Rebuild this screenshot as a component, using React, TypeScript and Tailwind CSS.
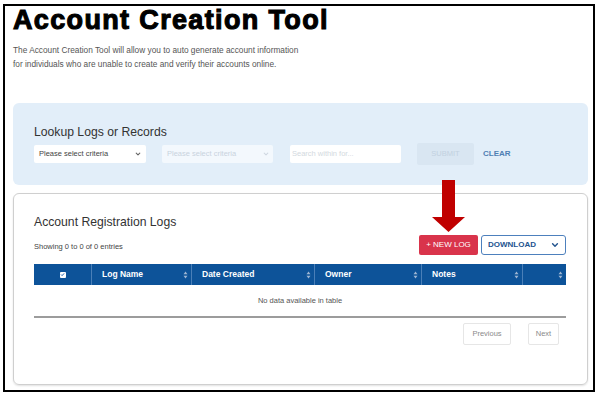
import React from 'react';

// Small up/down caret pair used on sortable table headers.
const SortIcon: React.FC = () => (
  <svg width="5" height="8" viewBox="0 0 5 8" className="shrink-0">
    <path d="M2.5 0.5 L4.5 3.2 L0.5 3.2 Z" fill="#9fb6d3" />
    <path d="M2.5 7.5 L4.5 4.8 L0.5 4.8 Z" fill="#9fb6d3" />
  </svg>
);

const Chevron: React.FC<{ color: string; size?: number }> = ({ color, size = 7 }) => (
  <svg width={size} height={size} viewBox="0 0 10 10" className="shrink-0">
    <path d="M2 3.5 L5 6.5 L8 3.5" fill="none" stroke={color} strokeWidth="1.8" strokeLinecap="round" strokeLinejoin="round" />
  </svg>
);

const columns = [
  { label: 'Log Name', width: 'w-[100px]' },
  { label: 'Date Created', width: 'w-[123px]' },
  { label: 'Owner', width: 'w-[107px]' },
  { label: 'Notes', width: 'w-[101px]' },
  { label: '', width: 'flex-1' },
];

export default function App() {
  return (
    <div className="relative h-[396px] w-[599px] bg-white pb-[4px] pl-[3px] pr-[4px] pt-[4px] font-['Liberation_Sans',Arial,sans-serif]">
      <div className="h-full border-2 border-black pl-[8px] pr-[5px]">
        <h1 className="text-[27px] font-bold leading-[28px] tracking-[1.35px] text-black [-webkit-text-stroke:1.1px_black]">
          Account Creation Tool
        </h1>
        <p className="mt-[9px] text-[8.3px] leading-[14px] text-[#555]">
          The Account Creation Tool will allow you to auto generate account information
          <br />
          for individuals who are unable to create and verify their accounts online.
        </p>

        {/* Lookup panel */}
        <section className="mt-[32px] h-[82px] rounded-md bg-[#e2eef9] pl-[21px] pt-[22px]">
          <h2 className="text-[12.2px] leading-[14px] text-[#333]">Lookup Logs or Records</h2>
          <div className="mt-[4px] flex h-[22px] items-center">
            <div className="flex h-[18px] w-[112px] items-center justify-between rounded-[2px] bg-white pl-[5px] pr-[5px] text-[7.5px] text-[#444]">
              <span>Please select criteria</span>
              <Chevron color="#666" size={6} />
            </div>
            <div className="ml-[16px] flex h-[18px] w-[111px] items-center justify-between rounded-[2px] bg-[#f3f8fd] pl-[5px] pr-[4px] text-[7.5px] text-[#c9d3de]">
              <span>Please select criteria</span>
              <Chevron color="#d0d8e2" size={6} />
            </div>
            <div className="ml-[17px] flex h-[18px] w-[111px] items-center rounded-[2px] bg-white pl-[2px] text-[7.5px] text-[#d3d9e0]">
              Search within for...
            </div>
            <div className="ml-[16px] flex h-[22px] w-[57px] items-center justify-center rounded-[2px] bg-[#d9e6f2] text-[7.5px] text-[#c2d1e0]">
              SUBMIT
            </div>
            <span className="ml-[9px] text-[8px] font-bold text-[#4f7fb3]">CLEAR</span>
          </div>
        </section>

        {/* Registration logs panel */}
        <section className="mt-[8px] h-[192px] rounded-md border border-[#cfcfcf] pl-[20px] pr-[21px] pt-[21px] shadow-[0_1px_2px_rgba(0,0,0,0.12)]">
          <h2 className="text-[12.2px] leading-[14px] text-[#333]">Account Registration Logs</h2>
          <div className="mt-[6px] flex h-[20px] items-center justify-between">
            <span className="mt-[3px] text-[7.5px] text-[#444]">Showing 0 to 0 of 0 entries</span>
            <div className="flex h-[20px] gap-[3px]">
              <div className="flex w-[59px] items-center justify-center rounded-[2px] bg-[#d9344b] text-[8px] text-white">
                + NEW LOG
              </div>
              <div className="flex w-[85px] items-center justify-between rounded-[3px] border border-[#4d80bd] bg-white pl-[6px] pr-[6px] text-[8px] font-bold text-[#23548f]">
                <span>DOWNLOAD</span>
                <Chevron color="#23548f" size={8} />
              </div>
            </div>
          </div>

          <div className="mt-[9px]">
            <div className="flex h-[21px] bg-[#0d5399] text-[8.5px] font-bold text-white">
              <div className="flex w-[58px] items-center justify-center border-r border-[#4a7fb8]">
                <div className="flex h-[6px] w-[6px] items-center justify-center rounded-[1px] bg-white">
                  <svg width="5" height="5" viewBox="0 0 10 10">
                    <path d="M2 5 L4.2 7.2 L8.2 2.8" fill="none" stroke="#1d5fb0" strokeWidth="2" />
                  </svg>
                </div>
              </div>
              {columns.map((c, i) => (
                <div
                  key={i}
                  className={`${c.width} flex items-center justify-between pl-[10px] pr-[3px] ${i < columns.length - 1 ? 'border-r border-[#4a7fb8]' : ''}`}
                >
                  <span>{c.label}</span>
                  <SortIcon />
                </div>
              ))}
            </div>
            <div className="flex h-[31px] items-center justify-center text-[7.5px] text-[#555]">
              No data available in table
            </div>
            <div className="h-[2px] bg-[#9c9c9c]" />
            <div className="mt-[5px] flex justify-end gap-[17px] pr-[7px]">
              <div className="flex h-[22px] w-[48px] items-center justify-center rounded-[2px] border border-[#e6e6e6] text-[7.5px] text-[#8a8a8a]">
                Previous
              </div>
              <div className="flex h-[22px] w-[31px] items-center justify-center rounded-[2px] border border-[#e6e6e6] text-[7.5px] text-[#8a8a8a]">
                Next
              </div>
            </div>
          </div>
        </section>
      </div>

      {/* Red annotation arrow pointing at the NEW LOG button */}
      <svg className="absolute left-[432px] top-[180px]" width="34" height="53" viewBox="0 0 34 53">
        <path d="M10 0 H23 V37 H33 L16.5 52 L0 37 H10 Z" fill="#c00000" />
      </svg>
    </div>
  );
}
